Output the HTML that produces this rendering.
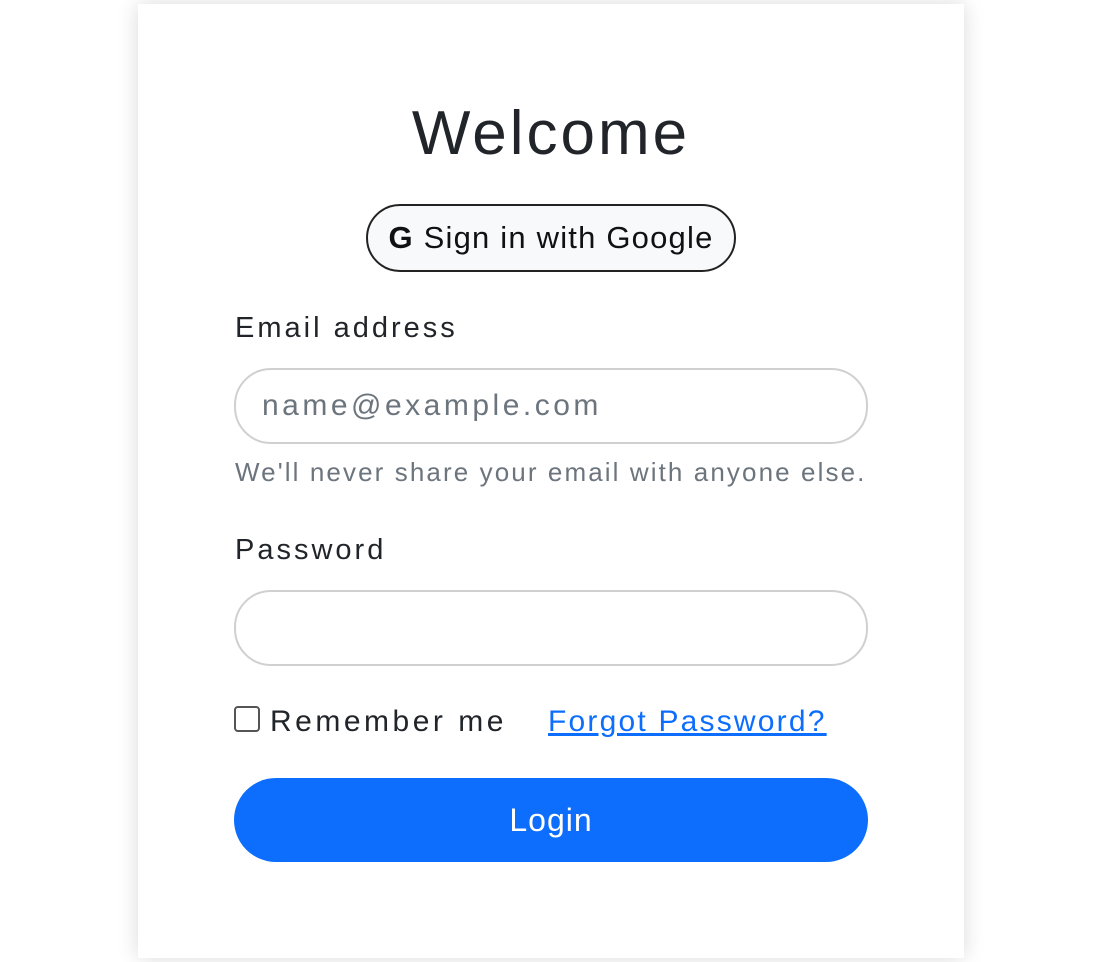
<!DOCTYPE html>
<html><head><style>
body{margin:0;width:1102px;height:962px;background:#fff;font-family:"Liberation Sans",sans-serif;overflow:hidden;position:relative;color:#212529}
.card{position:absolute;left:138px;top:4px;width:826px;height:954px;background:#fff;box-shadow:0 0 20px rgba(0,0,0,.15)}
.a{position:absolute;white-space:nowrap}
h1{position:absolute;left:0;width:100%;top:98px;margin:0;text-align:center;font-weight:400;font-size:62px;color:#212529;letter-spacing:3px}
.g{position:absolute;left:366px;top:204px;width:366px;height:64px;border:2px solid #222;border-radius:34px;background:#f8f9fa;box-sizing:content-box;font-size:31px;line-height:64px;text-align:center;color:#111;letter-spacing:1.2px}
.inp{position:absolute;left:234px;width:630px;height:72px;border:2px solid #d0d0d0;border-radius:37px;box-sizing:content-box}
.btn{position:absolute;left:234px;top:778px;width:634px;height:84px;background:#0d6efd;border-radius:42px;color:#fff;font-size:32px;text-align:center;line-height:84px;letter-spacing:1px}
</style></head><body>
<div class="card"></div>
<h1>Welcome</h1>
<div class="g"><b style="font-weight:700">G</b> Sign in with Google</div>
<div class="a" style="left:235px;top:312px;font-size:29px;letter-spacing:3px">Email address</div>
<div class="inp" style="top:368px"><span class="a" style="left:26px;top:19px;font-size:30px;color:#6c757d;letter-spacing:3.5px">name@example.com</span></div>
<div class="a" style="left:235px;top:457px;font-size:26px;color:#6c757d;letter-spacing:2.1px">We'll never share your email with anyone else.</div>
<div class="a" style="left:235px;top:534px;font-size:29px;letter-spacing:3px">Password</div>
<div class="inp" style="top:590px"></div>
<div class="a" style="left:234px;top:706px;width:26px;height:26px;border:2px solid #555;border-radius:4px;box-sizing:border-box"></div>
<div class="a" style="left:270px;top:705px;font-size:30px;letter-spacing:3.5px">Remember me</div>
<div class="a" style="left:548px;top:705px;font-size:30px;color:#0d6efd;text-decoration:underline;letter-spacing:2.2px">Forgot Password?</div>
<div class="btn">Login</div>
</body></html>
